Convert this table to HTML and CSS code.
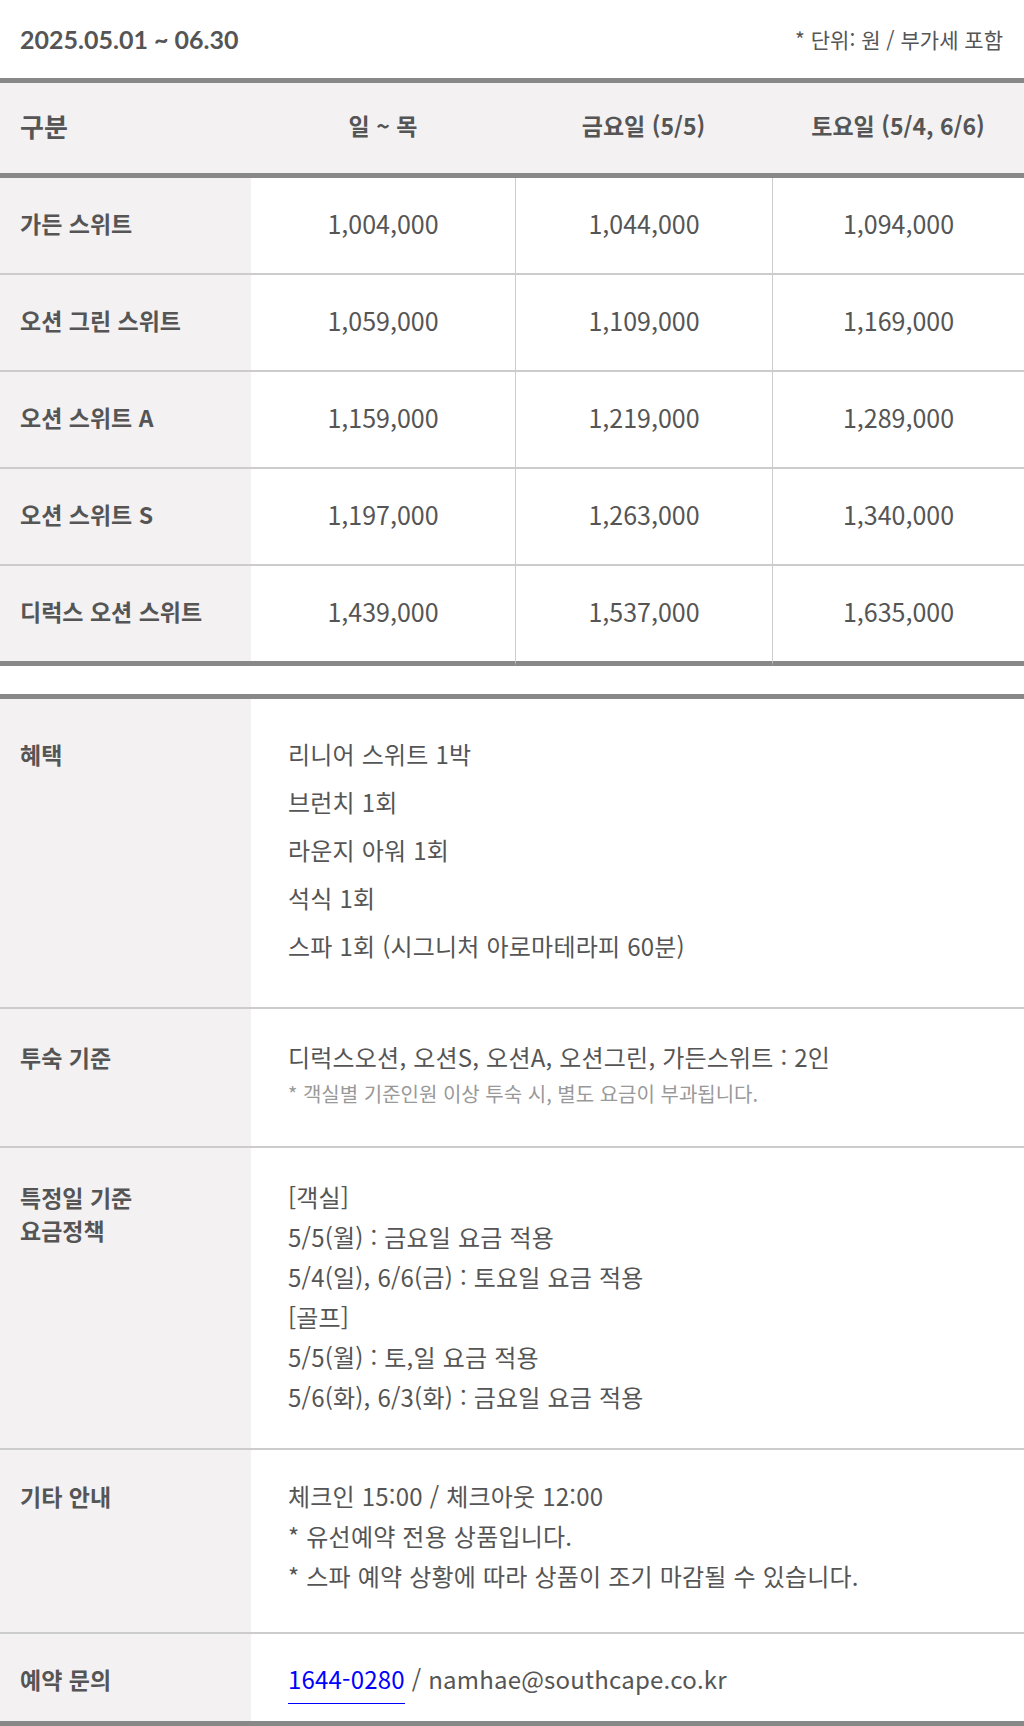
FILE: index.html
```html
<!DOCTYPE html>
<html lang="ko">

<head>
    <meta charset="UTF-8">
    <meta name="viewport" content="width=device-width, initial-scale=1.0">
    <title>요금 안내</title>
    <link rel="stylesheet" href="styles.css">
</head>

<body>
    <div class="top-bar">
        <span class="period">2025.05.01 ~ 06.30</span>
        <span class="unit">* 단위: 원 / 부가세 포함</span>
    </div>

    <table class="price-table">
        <colgroup>
            <col class="col-name">
            <col class="col-a">
            <col class="col-b">
            <col class="col-c">
        </colgroup>
        <thead>
            <tr>
                <th class="name">구분</th>
                <th>일 ~ 목</th>
                <th>금요일 (5/5)</th>
                <th>토요일 (5/4, 6/6)</th>
            </tr>
        </thead>
        <tbody>
            <tr>
                <td class="name">가든 스위트</td>
                <td>1,004,000</td>
                <td>1,044,000</td>
                <td>1,094,000</td>
            </tr>
            <tr>
                <td class="name">오션 그린 스위트</td>
                <td>1,059,000</td>
                <td>1,109,000</td>
                <td>1,169,000</td>
            </tr>
            <tr>
                <td class="name">오션 스위트 A</td>
                <td>1,159,000</td>
                <td>1,219,000</td>
                <td>1,289,000</td>
            </tr>
            <tr>
                <td class="name">오션 스위트 S</td>
                <td>1,197,000</td>
                <td>1,263,000</td>
                <td>1,340,000</td>
            </tr>
            <tr>
                <td class="name">디럭스 오션 스위트</td>
                <td>1,439,000</td>
                <td>1,537,000</td>
                <td>1,635,000</td>
            </tr>
        </tbody>
    </table>

    <div class="info">
        <div class="info-row benefit">
            <div class="info-label">혜택</div>
            <div class="info-body">
                <p>리니어 스위트 1박</p>
                <p>브런치 1회</p>
                <p>라운지 아워 1회</p>
                <p>석식 1회</p>
                <p>스파 1회 (시그니처 아로마테라피 60분)</p>
            </div>
        </div>

        <div class="info-row stay">
            <div class="info-label">투숙 기준</div>
            <div class="info-body">
                <p>디럭스오션, 오션S, 오션A, 오션그린, 가든스위트 : 2인</p>
                <p class="note">* 객실별 기준인원 이상 투숙 시, 별도 요금이 부과됩니다.</p>
            </div>
        </div>

        <div class="info-row special">
            <div class="info-label">특정일 기준<br>요금정책</div>
            <div class="info-body">
                <p>[객실]</p>
                <p>5/5(월) : 금요일 요금 적용</p>
                <p>5/4(일), 6/6(금) : 토요일 요금 적용</p>
                <p>[골프]</p>
                <p>5/5(월) : 토,일 요금 적용</p>
                <p>5/6(화), 6/3(화) : 금요일 요금 적용</p>
            </div>
        </div>

        <div class="info-row etc">
            <div class="info-label">기타 안내</div>
            <div class="info-body">
                <p>체크인 15:00 / 체크아웃 12:00</p>
                <p>* 유선예약 전용 상품입니다.</p>
                <p>* 스파 예약 상황에 따라 상품이 조기 마감될 수 있습니다.</p>
            </div>
        </div>

        <div class="info-row contact">
            <div class="info-label">예약 문의</div>
            <div class="info-body">
                <p><a href="#" class="tel">1644-0280</a> / namhae@southcape.co.kr</p>
            </div>
        </div>
    </div>
</body>

</html>
```

FILE: styles.css
```css
body {
    margin: 0;
    padding: 0;
    background-color: #fff;
    color: #555;
    font-family: "Noto Sans CJK KR", "Noto Sans", sans-serif;
}

.top-bar {
    height: 78px;
    display: flex;
    align-items: center;
    justify-content: space-between;
    padding: 0 21px 0 20px;
}

.period {
    font-family: Lato, "Noto Sans CJK KR", sans-serif;
    font-weight: bold;
    font-size: 25px;
    color: #555;
}

.unit {
    font-size: 21px;
    color: #555;
}

/* price table */
.price-table {
    width: 100%;
    table-layout: fixed;
    border-collapse: separate;
    border-spacing: 0;
}

.col-name {
    width: 251px;
}

.col-a {
    width: 264px;
}

.col-b {
    width: 257px;
}

.price-table th {
    height: 84px;
    padding: 0 0 6px;
    background-color: #f3f1f2;
    border-top: 5px solid #888;
    border-bottom: 5px solid #888;
    font-size: 23px;
    font-weight: bold;
    text-align: center;
    color: #555;
}

.price-table th.name {
    font-size: 26px;
    text-align: left;
    padding-left: 20px;
}

.price-table td {
    height: 89px;
    padding: 0 0 6px;
    border-bottom: 2px solid #ccc;
    font-size: 25px;
    text-align: center;
    color: #555;
}

.price-table td + td + td {
    border-left: 1px solid #ccc;
}

.price-table td.name {
    background-color: #f3f1f2;
    font-size: 23px;
    font-weight: bold;
    text-align: left;
    padding-left: 20px;
}

.price-table tbody tr:last-child td {
    border-bottom: 5px solid #888;
}

/* info rows */
.info {
    margin-top: 28px;
    border-top: 5px solid #888;
    border-bottom: 5px solid #888;
}

.info-row {
    display: grid;
    grid-template-columns: 251px 1fr;
    border-bottom: 2px solid #ccc;
}

.info-row:last-child {
    border-bottom: none;
}

.info-label {
    background-color: #f3f1f2;
    padding: 30px 20px;
    font-size: 23px;
    font-weight: bold;
    line-height: 40px;
}

.info-body {
    padding: 30px 37px;
    font-size: 24px;
    line-height: 40px;
    letter-spacing: 0.2px;
}

.info-body p {
    margin: 0;
}

.benefit .info-label,
.benefit .info-body {
    padding-top: 31px;
    padding-bottom: 37px;
    line-height: 48px;
}

.stay .info-label,
.stay .info-body {
    padding-top: 28px;
}

.stay .info-body {
    padding-bottom: 35px;
}

.note {
    font-size: 20px;
    line-height: 34px;
    letter-spacing: 0;
    color: #999;
}

.special .info-label {
    padding-top: 33px;
    line-height: 33px;
}

.special .info-body {
    padding-top: 29px;
    padding-bottom: 31px;
}

.etc .info-label,
.etc .info-body {
    padding-top: 26px;
    padding-bottom: 36px;
}

.contact .info-label,
.contact .info-body {
    padding-top: 25px;
    padding-bottom: 22px;
}

.tel {
    color: #0000ff;
    text-decoration: none;
    border-bottom: 1px solid #0000ff;
    padding-bottom: 7px;
}
```
